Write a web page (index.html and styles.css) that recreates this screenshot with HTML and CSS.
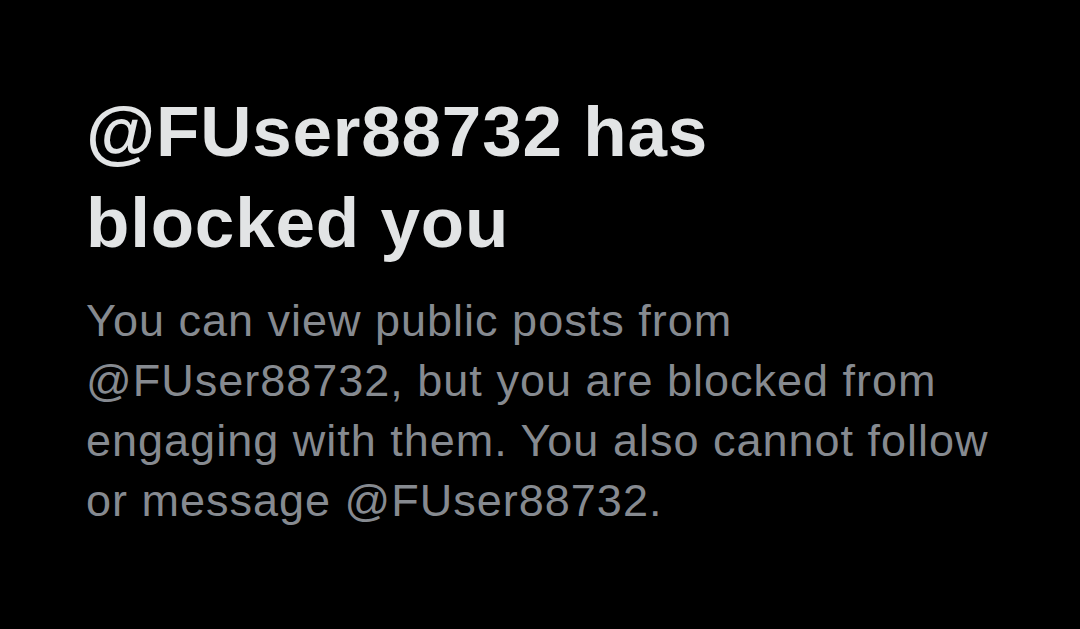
FILE: index.html
```html
<!DOCTYPE html>
<html lang="en">
<head>
<meta charset="utf-8">
<title>Blocked</title>
<link rel="stylesheet" href="styles.css">
</head>
<body>
<main class="notice">
  <h1 class="notice-title">@FUser88732 has blocked you</h1>
  <p class="notice-text">You can view public posts from @FUser88732, but you are blocked from engaging with them. You also cannot follow or message @FUser88732.</p>
</main>
</body>
</html>
```

FILE: styles.css
```css
html, body {
  margin: 0;
  padding: 0;
  background: #000000;
  height: 100%;
}
.notice {
  padding: 86px 30px 0 86px;
  font-family: "Liberation Sans", Arial, sans-serif;
}
.notice-title {
  margin: 0;
  font-size: 71px;
  line-height: 91px;
  font-weight: 700;
  letter-spacing: 0.8px;
  color: #e2e4e5;
  width: 700px;
}
.notice-text {
  margin: 23px 0 0 0;
  font-size: 45px;
  line-height: 60px;
  font-weight: 400;
  letter-spacing: 1px;
  color: #868a90;
  width: 945px;
}
```
